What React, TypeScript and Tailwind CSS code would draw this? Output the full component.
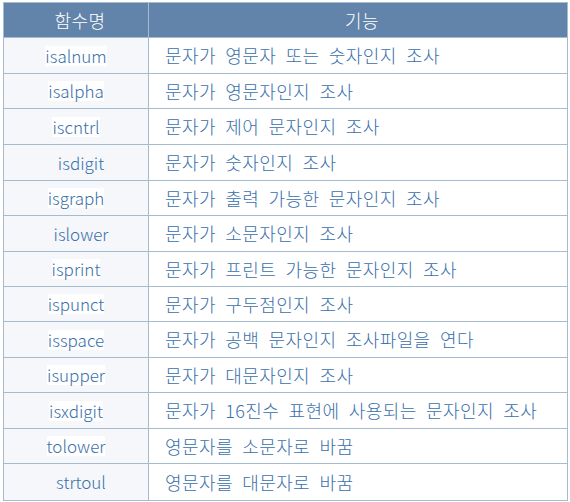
const rows = [
  { name: "isalnum", desc: "문자가 영문자 또는 숫자인지 조사", hl: true },
  { name: "isalpha", desc: "문자가 영문자인지 조사", hl: true },
  { name: "iscntrl", desc: "문자가 제어 문자인지 조사", hl: true },
  { name: "isdigit", desc: "문자가 숫자인지 조사", hl: false },
  { name: "isgraph", desc: "문자가 출력 가능한 문자인지 조사", hl: true },
  { name: "islower", desc: "문자가 소문자인지 조사", hl: false },
  { name: "isprint", desc: "문자가 프린트 가능한 문자인지 조사", hl: true },
  { name: "ispunct", desc: "문자가 구두점인지 조사", hl: true },
  { name: "isspace", desc: "문자가 공백 문자인지 조사파일을 연다", hl: true },
  { name: "isupper", desc: "문자가 대문자인지 조사", hl: true },
  { name: "isxdigit", desc: "문자가 16진수 표현에 사용되는 문자인지 조사", hl: true },
  { name: "tolower", desc: "영문자를 소문자로 바꿈", hl: true },
  { name: "strtoul", desc: "영문자를 대문자로 바꿈", hl: false },
];

// row heights include the bottom line
const heights = [
  "h-[36px]", "h-[35px]", "h-[36px]", "h-[36px]", "h-[35px]", "h-[36px]", "h-[35px]",
  "h-[35px]", "h-[36px]", "h-[35px]", "h-[36px]", "h-[35px]", "h-[36px]",
];

const App = () => {
  return (
    <div className="bg-white w-[570px] h-[502px] pt-[2px] pl-[3px] font-['Noto_Sans_CJK_KR',sans-serif] font-light text-[17px]">
      <div className="w-[565px] border border-[#a5bbd0]">
        <div className="flex h-[35px] bg-[#6284aa] text-white border-b border-[#a5bbd0] text-[18px] tracking-[0.4px]">
          <div className="w-[145px] border-r border-[#a5bbd0] flex items-center justify-center pl-2">
            함수명
          </div>
          <div className="flex-1 flex items-center justify-center pl-2">기능</div>
        </div>
        {rows.map((r, i) => (
          <div
            key={r.name}
            className={`flex text-[#3a70aa] ${heights[i]} ${i < rows.length - 1 ? "border-b border-[#a5bbd0]" : "h-[35px]"}`}
          >
            <div className="w-[145px] bg-[#f5f7fa] border-r border-[#a5bbd0] flex items-center justify-center">
              <span className={r.hl ? "bg-white leading-[20px]" : "ml-[10px] leading-[20px]"}>{r.name}</span>
            </div>
            <div className="flex-1 flex items-center pl-[16px] whitespace-nowrap text-[18px] tracking-[0.4px] [word-spacing:5px]">
              {r.desc}
            </div>
          </div>
        ))}
      </div>
    </div>
  );
};

export default App;
